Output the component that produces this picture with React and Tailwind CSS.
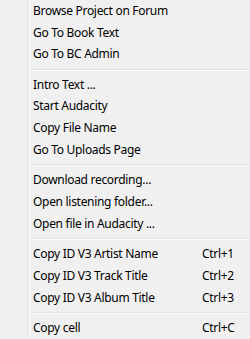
import React from "react";

const groups = [
  [["Browse Project on Forum"], ["Go To Book Text"], ["Go To BC Admin"]],
  [["Intro Text ..."], ["Start Audacity"], ["Copy File Name"], ["Go To Uploads Page"]],
  [["Download recording..."], ["Open listening folder..."], ["Open file in Audacity ..."]],
  [
    ["Copy ID V3 Artist Name", "Ctrl+1"],
    ["Copy ID V3 Track Title", "Ctrl+2"],
    ["Copy ID V3 Album Title", "Ctrl+3"],
  ],
  [["Copy cell", "Ctrl+C"]],
];

export default function App() {
  return (
    <div
      className="w-[250px] h-[339px] bg-[#f0f0f0] overflow-hidden flex text-black text-[12px] tracking-[-0.3px]"
      style={{ fontFamily: '"Noto Sans", "Open Sans", sans-serif' }}
    >
      <div className="w-[29px] shrink-0 border-r border-[#e2e3e3]" />
      <div className="flex-1 border-l border-white flex flex-col">
        {groups.map((g, gi) => (
          <React.Fragment key={gi}>
            {gi > 0 && (
              <div className="h-[9px] flex flex-col justify-center">
                <div className="h-px bg-[#e0e0e0]" />
                <div className="h-px bg-white" />
              </div>
            )}
            {g.map(([label, sc]) => (
              <div key={label} className="h-[22px] flex items-center pl-[3px] leading-none whitespace-nowrap">
                <span className="w-[169px]">{label}</span>
                {sc && <span>{sc}</span>}
              </div>
            ))}
          </React.Fragment>
        ))}
      </div>
    </div>
  );
}
